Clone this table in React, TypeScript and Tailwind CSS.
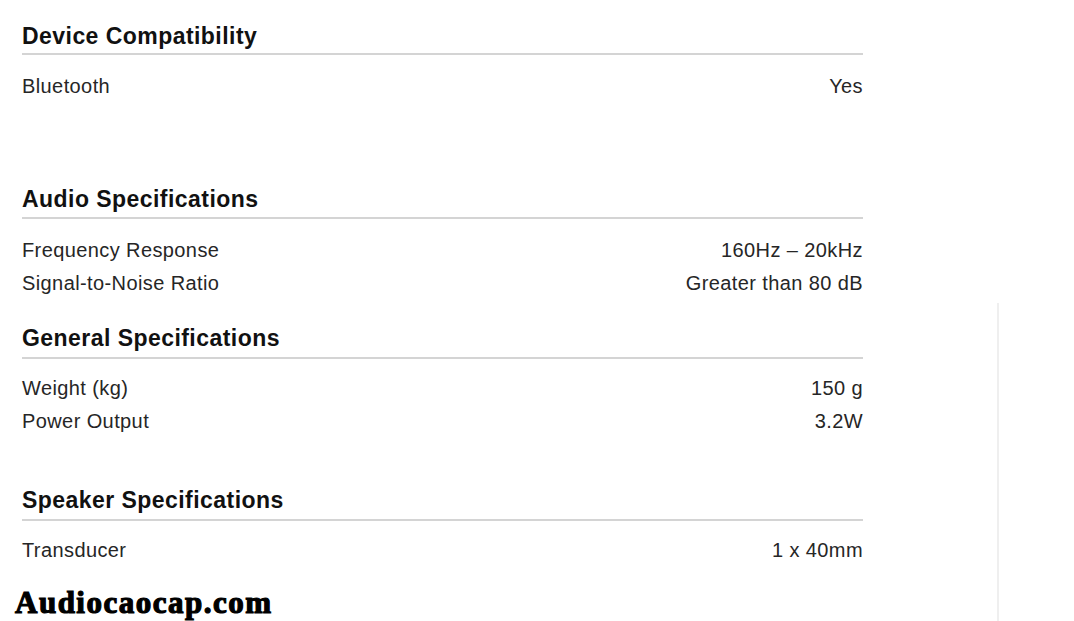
import React from 'react';

interface SpecRow {
  label: string;
  value: string;
}

interface SpecSection {
  title: string;
  rows: SpecRow[];
  gap: string;
  pad: string;
  rowsTop: string;
}

const sections: SpecSection[] = [
  {
    title: 'Device Compatibility',
    rows: [{ label: 'Bluetooth', value: 'Yes' }],
    gap: 'mt-[24px]',
    pad: 'pb-[5px]',
    rowsTop: 'mt-[14px]',
  },
  {
    title: 'Audio Specifications',
    rows: [
      { label: 'Frequency Response', value: '160Hz – 20kHz' },
      { label: 'Signal-to-Noise Ratio', value: 'Greater than 80 dB' },
    ],
    gap: 'mt-[85px]',
    pad: 'pb-[6px]',
    rowsTop: 'mt-[14px]',
  },
  {
    title: 'General Specifications',
    rows: [
      { label: 'Weight (kg)', value: '150 g' },
      { label: 'Power Output', value: '3.2W' },
    ],
    gap: 'mt-[27px]',
    pad: 'pb-[7px]',
    rowsTop: 'mt-[12px]',
  },
  {
    title: 'Speaker Specifications',
    rows: [{ label: 'Transducer', value: '1 x 40mm' }],
    gap: 'mt-[51px]',
    pad: 'pb-[7px]',
    rowsTop: 'mt-[12px]',
  },
];

function Section({ section }: { section: SpecSection }) {
  return (
    <div className={section.gap}>
      <div className={`border-b-2 border-[#d4d4d4] ${section.pad}`}>
        <h3 className="text-[23px] leading-[24px] font-bold tracking-[0.45px] text-[#111]">{section.title}</h3>
      </div>
      <div className={section.rowsTop}>
        {section.rows.map((row) => (
          <div key={row.label} className="flex justify-between items-center h-[33px] text-[20px] tracking-[0.4px] text-[#262626]">
            <span>{row.label}</span>
            <span>{row.value}</span>
          </div>
        ))}
      </div>
    </div>
  );
}

export default function App() {
  return (
    <div className="flex h-[621px] w-[1074px] overflow-hidden bg-white font-['Liberation_Sans',Arial,sans-serif]">
      <div className="flex flex-col w-[863px] pl-[22px] shrink-0">
        {sections.map((section) => (
          <Section key={section.title} section={section} />
        ))}
        <div className="mt-[22px] -ml-[7px] text-[31px] leading-[30px] font-bold tracking-[1.5px] text-black font-['Liberation_Serif','Times_New_Roman',serif] [-webkit-text-stroke:1.2px_black]">
          Audiocaocap.com
        </div>
      </div>
      <div className="ml-[134px] mt-[303px] w-[2px] bg-[#efefef]" />
    </div>
  );
}
